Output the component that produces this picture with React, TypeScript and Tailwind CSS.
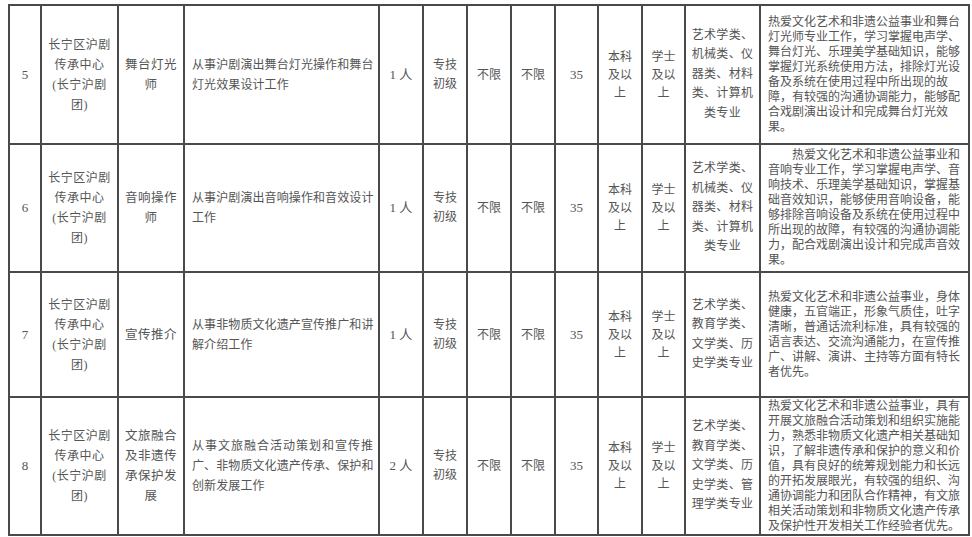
import React from 'react';

type Row = {
  no: string;
  org: string[];
  title: string[];
  duty: string[];
  dutyWide?: boolean;
  count: string;
  majors: string[];
  req: string[];
  indent?: boolean;
  height: string;
};

const ORG = ['长宁区沪剧', '传承中心', '(长宁沪剧', '团)'];

const rows: Row[] = [
  {
    no: '5',
    org: ORG,
    title: ['舞台灯光', '师'],
    duty: ['从事沪剧演出舞台灯光操作和舞台', '灯光效果设计工作'],
    count: '1 人',
    majors: ['艺术学类、', '机械类、仪', '器类、材料', '类、计算机', '类专业'],
    req: [
      '热爱文化艺术和非遗公益事业和舞台',
      '灯光师专业工作，学习掌握电声学、',
      '舞台灯光、乐理美学基础知识，能够',
      '掌握灯光系统使用方法，排除灯光设',
      '备及系统在使用过程中所出现的故',
      '障，有较强的沟通协调能力，能够配',
      '合戏剧演出设计和完成舞台灯光效',
      '果。',
    ],
    height: 'h-[139px]',
  },
  {
    no: '6',
    org: ORG,
    title: ['音响操作', '师'],
    duty: ['从事沪剧演出音响操作和音效设计', '工作'],
    count: '1 人',
    majors: ['艺术学类、', '机械类、仪', '器类、材料', '类、计算机', '类专业'],
    req: [
      '热爱文化艺术和非遗公益事业和',
      '音响专业工作，学习掌握电声学、音',
      '响技术、乐理美学基础知识，掌握基',
      '础音效知识，能够使用音响设备，能',
      '够排除音响设备及系统在使用过程中',
      '所出现的故障，有较强的沟通协调能',
      '力，配合戏剧演出设计和完成声音效',
      '果。',
    ],
    indent: true,
    height: 'h-[128px]',
  },
  {
    no: '7',
    org: ORG,
    title: ['宣传推介'],
    duty: ['从事非物质文化遗产宣传推广和讲', '解介绍工作'],
    count: '1 人',
    majors: ['艺术学类、', '教育学类、', '文学类、历', '史学类专业'],
    req: [
      '热爱文化艺术和非遗公益事业，身体',
      '健康，五官端正，形象气质佳，吐字',
      '清晰，普通话流利标准，具有较强的',
      '语言表达、交流沟通能力，在宣传推',
      '广、讲解、演讲、主持等方面有特长',
      '者优先。',
    ],
    height: 'h-[125px]',
  },
  {
    no: '8',
    org: ORG,
    title: ['文旅融合', '及非遗传', '承保护发', '展'],
    duty: ['从事文旅融合活动策划和宣传推', '广、非物质文化遗产传承、保护和', '创新发展工作'],
    dutyWide: true,
    count: '2 人',
    majors: ['艺术学类、', '教育学类、', '文学类、历', '史学类、管', '理学类专业'],
    req: [
      '热爱文化艺术和非遗公益事业，具有',
      '开展文旅融合活动策划和组织实施能',
      '力，熟悉非物质文化遗产相关基础知',
      '识，了解非遗传承和保护的意义和价',
      '值，具有良好的统筹规划能力和长远',
      '的开拓发展眼光，有较强的组织、沟',
      '通协调能力和团队合作精神，有文旅',
      '相关活动策划和非物质文化遗产传承',
      '及保护性开发相关工作经验者优先。',
    ],
    height: 'h-[138px]',
  },
];

const cell = 'border-2 border-[#4a4a4a] align-middle p-0';

function Lines({ items, className }: { items: string[]; className?: string }) {
  return (
    <div className={className}>
      {items.map((t, i) => (
        <div key={i} className="whitespace-nowrap">
          {t}
        </div>
      ))}
    </div>
  );
}

export default function App() {
  return (
    <div
      className="w-[972px] h-[537px] bg-white overflow-hidden pt-[4px] pl-[8px] text-[#555] text-[12px]"
      style={{ fontFamily: '"Liberation Serif", "Noto Sans CJK SC", serif' }}
    >
      <table className="table-fixed border-collapse w-[960px]">
        <colgroup>
          <col className="w-[32px]" />
          <col className="w-[77px]" />
          <col className="w-[66px]" />
          <col className="w-[195px]" />
          <col className="w-[44px]" />
          <col className="w-[44px]" />
          <col className="w-[44px]" />
          <col className="w-[44px]" />
          <col className="w-[43px]" />
          <col className="w-[44px]" />
          <col className="w-[43px]" />
          <col className="w-[75px]" />
          <col className="w-[209px]" />
        </colgroup>
        <tbody>
          {rows.map((r) => (
            <tr key={r.no} className={r.height}>
              <td className={`${cell} text-center text-[13px]`}>{r.no}</td>
              <td className={`${cell} text-center`}>
                <Lines items={r.org} className="leading-[20px] tracking-[0.5px]" />
              </td>
              <td className={`${cell} text-center`}>
                <Lines items={r.title} className="leading-[20px] text-[12.5px] tracking-[0.5px]" />
              </td>
              <td className={`${cell} px-[7px]`}>
                {r.duty.map((t, i) => (
                  <div
                    key={i}
                    className={`whitespace-nowrap leading-[20px] ${r.dutyWide && i === 0 ? 'tracking-[1px]' : 'tracking-[0.1px]'}`}
                  >
                    {t}
                  </div>
                ))}
              </td>
              <td className={`${cell} text-center text-[13px]`}>{r.count}</td>
              <td className={`${cell} text-center`}>
                <Lines items={['专技', '初级']} className="leading-[19px]" />
              </td>
              <td className={`${cell} text-center`}>不限</td>
              <td className={`${cell} text-center`}>不限</td>
              <td className={`${cell} text-center text-[13px]`}>35</td>
              <td className={`${cell} text-center`}>
                <Lines items={['本科', '及以', '上']} className="leading-[18px]" />
              </td>
              <td className={`${cell} text-center`}>
                <Lines items={['学士', '及以', '上']} className="leading-[18px]" />
              </td>
              <td className={`${cell} text-center`}>
                <Lines items={r.majors} className="leading-[19.5px] tracking-[0.3px]" />
              </td>
              <td className={`${cell} pl-[7px]`}>
                {r.req.map((t, i) => (
                  <div
                    key={i}
                    className={`whitespace-nowrap leading-[15px] ${r.indent && i === 0 ? 'pl-[24px]' : ''}`}
                  >
                    {t}
                  </div>
                ))}
              </td>
            </tr>
          ))}
        </tbody>
      </table>
    </div>
  );
}
